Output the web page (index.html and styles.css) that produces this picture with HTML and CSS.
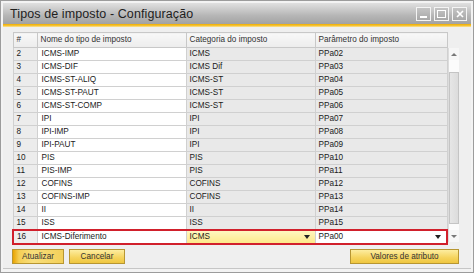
FILE: index.html
```html
<!DOCTYPE html>
<html>
<head>
	<meta charset="utf-8">
	<title>Tipos de imposto - Configuração</title>
	<link rel="stylesheet" href="styles.css">
</head>
<body>
	<div class="window">
		<div class="titlebar">
			<h1>Tipos de imposto - Configuração</h1>
			<div class="winbtns">
				<span class="wb wb-min"></span>
				<span class="wb wb-max"></span>
				<span class="wb wb-close">
					<svg width="8" height="8" viewBox="0 0 8 8"><path d="M1 1L7 7M7 1L1 7" stroke="#fff" stroke-width="1.6"/></svg>
				</span>
			</div>
		</div>
		<div class="accent"></div>
		<div class="body">
			<div class="grid">
				<table id="table">
					<colgroup><col class="c-num"><col class="c-name"><col class="c-cat"><col class="c-par"></colgroup>
					<tr><th>#</th><th>Nome do tipo de imposto</th><th>Categoria do imposto</th><th>Parâmetro do imposto</th></tr>
				</table>
				<div class="scroll">
					<div class="sb-btn"><span class="up"></span></div>
					<div class="sb-track"><div class="sb-thumb"></div></div>
					<div class="sb-btn"><span class="down"></span></div>
				</div>
			</div>
			<div class="buttons">
				<button class="btn btn-main">Atualizar</button>
				<button class="btn">Cancelar</button>
				<button class="btn btn-right">Valores de atributo</button>
			</div>
		</div>
	</div>
<script>
	const table = document.getElementById('table');
	const rows = [
		['2', 'ICMS-IMP', 'ICMS', 'PPa02'],
		['3', 'ICMS-DIF', 'ICMS Dif', 'PPa03'],
		['4', 'ICMS-ST-ALIQ', 'ICMS-ST', 'PPa04'],
		['5', 'ICMS-ST-PAUT', 'ICMS-ST', 'PPa05'],
		['6', 'ICMS-ST-COMP', 'ICMS-ST', 'PPa06'],
		['7', 'IPI', 'IPI', 'PPa07'],
		['8', 'IPI-IMP', 'IPI', 'PPa08'],
		['9', 'IPI-PAUT', 'IPI', 'PPa09'],
		['10', 'PIS', 'PIS', 'PPa10'],
		['11', 'PIS-IMP', 'PIS', 'PPa11'],
		['12', 'COFINS', 'COFINS', 'PPa12'],
		['13', 'COFINS-IMP', 'COFINS', 'PPa13'],
		['14', 'II', 'II', 'PPa14'],
		['15', 'ISS', 'ISS', 'PPa15']
	];
	for(let i = 0; i < rows.length; i++){
		const ntr = document.createElement('tr');
		for(let z = 0; z < rows[i].length; z++){
			const td = document.createElement('td');
			td.textContent = rows[i][z];
			ntr.appendChild(td);
		}
		table.appendChild(ntr);
	}
	const last = document.createElement('tr');
	last.className = 'active';
	last.innerHTML = '<td>16</td><td>ICMS-Diferimento</td><td class="combo">ICMS<span class="caret"></span></td><td class="combo white">PPa00<span class="caret"></span></td>';
	table.appendChild(last);
</script>
</body>
</html>
```

FILE: styles.css
```css
body{margin: 0;font-family: 'Liberation Sans', Arial, sans-serif;color: #1a1a1a;background: #fff;}
.window{width: 474px;height: 273px;box-sizing: border-box;border: 1px solid #9c9c9c;background: #f3f3f3;padding: 2px 2px 3px;display: flex;flex-direction: column;}
.titlebar{height: 21px;flex: none;display: flex;align-items: center;justify-content: space-between;padding: 0 4px 0 7px;background: linear-gradient(#e0e0e0, #b6b6b6 60%, #a2a2a2);}
.titlebar h1{margin: 0;font-size: 12.5px;font-weight: normal;color: #1e1e1e;letter-spacing: 0.1px;}
.winbtns{display: flex;gap: 3px;}
.wb{width: 15px;height: 14px;box-sizing: border-box;border: 1px solid #f4f4f4;background: linear-gradient(#c4c4c4, #a8a8a8);display: flex;align-items: center;justify-content: center;}
.wb-min::after{content: '';width: 7px;height: 2px;background: #fff;margin-top: 6px;}
.wb-max::after{content: '';width: 7px;height: 6px;border: 1px solid #fff;}
.accent{height: 3px;flex: none;background: linear-gradient(#f0ad00, #f6c840 66%, #fbe7a8);}
.body{flex: 1;padding: 5px 12px 0 9px;border-bottom: 1px solid #c6c6c6;background: #efefef;}
.grid{display: flex;align-items: flex-start;}
table{border-collapse: collapse;table-layout: fixed;width: 434px;font-size: 8.2px;}
.c-num{width: 24px;}
.c-name{width: 149px;}
.c-cat{width: 129px;}
.c-par{width: 132px;}
th, td{height: 12px;padding: 0 3px;text-align: left;white-space: nowrap;overflow: hidden;border: 1px solid #d0d0d0;line-height: 12px;}
th{height: 14px;font-weight: normal;color: #333;background: linear-gradient(#f8f8f8, #ececec);border-color: #c8c8c8;}
td{background: #e9e9e9;}
td:first-child{background: #ececec;}
td:nth-child(2){background: #fff;padding-left: 4px;}
tr.active td{border-top: 2px solid #d1202c;border-bottom: 2px solid #d1202c;height: 11px;}
tr.active td:first-child{border-left: 2px solid #d1202c;background: #eeeeee;}
tr.active td:last-child{border-right: 2px solid #d1202c;}
td.combo{position: relative;background: linear-gradient(#fff6c0, #fde98a);}
td.combo.white{background: #fff;}
.caret{position: absolute;right: 5px;top: 4px;border-left: 3px solid transparent;border-right: 3px solid transparent;border-top: 4px solid #222;}
.scroll{width: 13px;margin-top: 16px;height: 194px;display: flex;flex-direction: column;border-left: 1px solid #dcdcdc;background: #f6f6f6;}
.sb-btn{height: 12px;display: flex;align-items: center;justify-content: center;flex: none;}
.up{border-left: 3px solid transparent;border-right: 3px solid transparent;border-bottom: 3px solid #777;}
.down{border-left: 3px solid transparent;border-right: 3px solid transparent;border-top: 3px solid #777;}
.sb-track{flex: 1;padding: 12px 0 6px;background: #fbfbfb;}
.sb-thumb{height: 100%;box-sizing: border-box;border: 1px solid #c4c4c4;background: linear-gradient(90deg, #e6e6e6, #dcdcdc);}
.buttons{display: flex;gap: 5px;margin-top: 4px;}
.btn{height: 15px;padding: 0;font-family: 'Liberation Sans', Arial, sans-serif;font-size: 8.2px;color: #333;border: 1px solid #b79632;background: linear-gradient(#fdeda0, #f5d35c 60%, #efc640);}
.btn-main{width: 52px;background: linear-gradient(90deg, #e9a300, #f5cf55 12%, #f8de7c 40%, #f3d05a);}
.btn:nth-child(2){width: 56px;}
.btn-right{width: 109px;margin-left: auto;}
```
